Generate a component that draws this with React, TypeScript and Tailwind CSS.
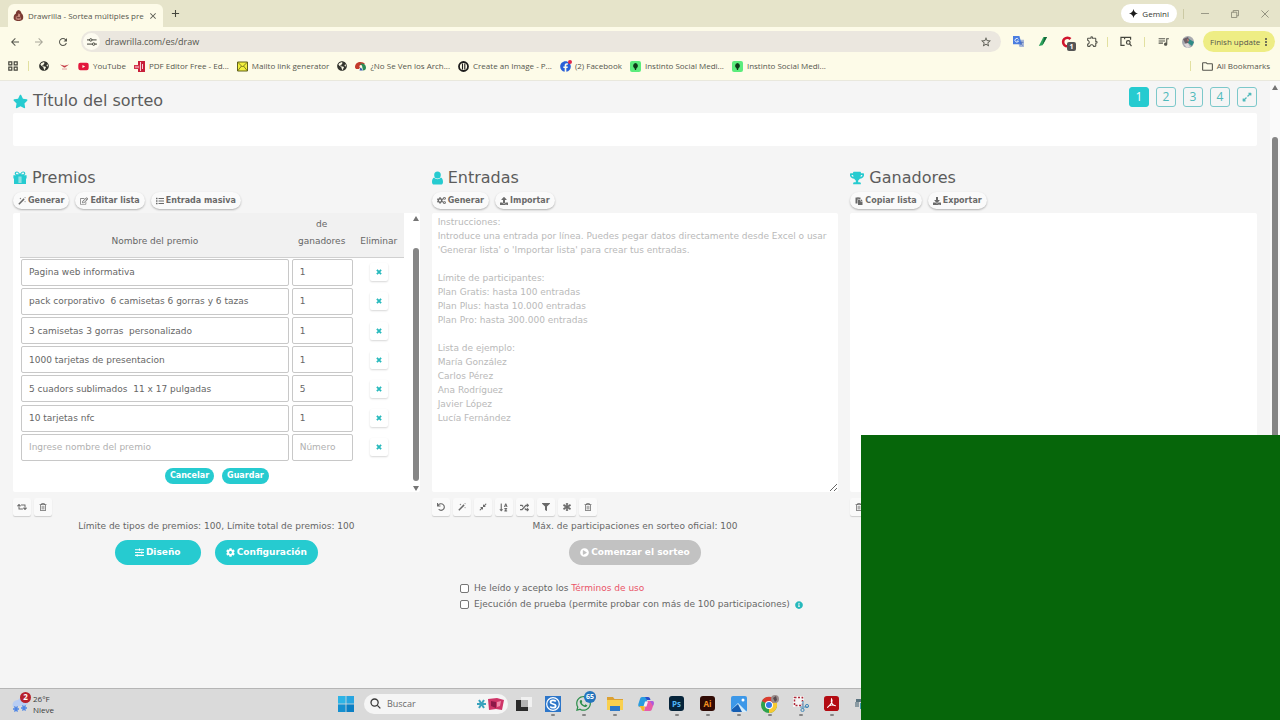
import React, { useState } from 'react';
import {
  FaAsterisk,
  FaCog,
  FaCogs,
  FaCompressAlt,
  FaDownload,
  FaExpandAlt,
  FaFilter,
  FaGlobeAmericas,
  FaInfoCircle,
  FaList,
  FaPaste,
  FaPlayCircle,
  FaRandom,
  FaRegEdit,
  FaRegTrashAlt,
  FaRetweet,
  FaSlidersH,
  FaSortAlphaDown,
  FaStar,
  FaTrophy,
  FaUndo,
  FaUpload,
  FaFacebook,
  FaYoutube,
  FaWhatsapp,
} from 'react-icons/fa';
import {
  MdArrowBack,
  MdArrowForward,
  MdClose,
  MdMoreVert,
  MdOutlineExtension,
  MdOutlineFolder,
  MdQueueMusic,
  MdRefresh,
  MdStarBorder,
} from 'react-icons/md';

const prizes = [
  { name: 'Pagina web informativa', count: '1' },
  { name: 'pack corporativo  6 camisetas 6 gorras y 6 tazas', count: '1' },
  { name: '3 camisetas 3 gorras  personalizado', count: '1' },
  { name: '1000 tarjetas de presentacion', count: '1' },
  { name: '5 cuadors sublimados  11 x 17 pulgadas', count: '5' },
  { name: '10 tarjetas nfc', count: '1' },
  { name: '', count: '' },
];

const placeholder = `Instrucciones:
Introduce una entrada por línea. Puedes pegar datos directamente desde Excel o usar 'Generar lista' o 'Importar lista' para crear tus entradas.

Límite de participantes:
Plan Gratis: hasta 100 entradas
Plan Plus: hasta 10.000 entradas
Plan Pro: hasta 300.000 entradas

Lista de ejemplo:
María González
Carlos Pérez
Ana Rodríguez
Javier López
Lucía Fernández`;

/* ---------- small drawings ---------- */

const GiftIcon = () => (
  <svg viewBox="0 0 14 14" className="size-[14px]" fill="#26cbd0">
    <path
      fillRule="evenodd"
      d="M6.2 4.2H4.1C2.6 4.2 1.7 3.400 1.700 2.400 1.700 1.300 2.600.500 3.800.500c1.400 0 2.300 1 3.200 2.300C7.900 1.500 8.800.500 10.200.500c1.200 0 2.100.8 2.100 1.900 0 1-.9 1.800-2.400 1.800H13.600v3.300H13V13H1V7.500H.4V4.200zM3.900 1.600c-.6 0-1 .4-1 .8s.4.8 1.200.8h1.800C5.200 2.200 4.600 1.600 3.900 1.600zM10.100 1.600c-.7 0-1.300.6-2 1.600h1.800c.8 0 1.200-.4 1.200-.8s-.4-.8-1-.8zM5.700 5.500V12h.8V5.500zM7.500 5.500V12h.8V5.500z"
    />
  </svg>
);

const UserIcon = () => (
  <svg viewBox="0 0 11 14" className="h-[14px] w-[11px]" fill="#26cbd0">
    <ellipse cx="5.500" cy="4" rx="3.300" ry="3.500" />
    <path d="M2.200 6.600C.8 7 0 8.800 0 11c0 1.600.8 2.600 2.100 2.600h6.800c1.300 0 2.100-1 2.100-2.600 0-2.200-.8-4-2.200-4.400C8 7.700 6.900 8.300 5.500 8.300S3 7.700 2.200 6.600z" />
  </svg>
);

const WandIcon = () => (
  <svg viewBox="0 0 10 10" className="size-[8px]" fill="currentColor">
    <path d="M.4 8.300L7 1.700 8.300 3 1.700 9.600z" />
    <path d="M3 .6l.4.9.9.4-.9.4L3 3.200l-.4-.9-.9-.4.9-.4zM8.800 0l.3.7.7.3-.7.3-.3.7-.3-.7-.7-.3.7-.3zM8.800 5l.3.7.7.3-.7.3-.3.7-.3-.7-.7-.3.7-.3z" />
  </svg>
);

const CrossIcon = () => (
  <svg viewBox="0 0 8 8" className="size-[6px]" stroke="#26b9bc" strokeWidth="2.400">
    <path d="M1.200 1.200l5.600 5.600M6.800 1.200L1.200 6.800" />
  </svg>
);

const GorillaIcon = () => (
  <svg viewBox="0 0 12 12" className="size-[11px] shrink-0">
    <path d="M6 0c2 .5 3 2 3.200 3.500C11 5 11.500 7 11 9.500 10 11.500 8 12 6 12S1.500 11.500.8 9.500C.5 7 1 5 3 4 3 2 4.500.5 6 0z" fill="#7a3a32" />
    <path d="M6 3.500l2 1.500-.5 2H5zM3 7h5l1 3-3 1-3-1z" fill="#c98d80" />
    <path d="M4 8h4v1H4z" fill="#53211c" />
  </svg>
);

const TuneIcon = () => (
  <svg viewBox="0 0 12 12" className="size-[10px]" fill="none" stroke="#45463d" strokeWidth="1.200">
    <path d="M0 3.500h3M6 3.500h5.500M0 8.500h6M9.500 8.500H12" />
    <circle cx="4.500" cy="3.500" r="1.500" />
    <circle cx="8" cy="8.500" r="1.500" />
  </svg>
);

const AppsIcon = () => (
  <svg viewBox="0 0 10 10" className="size-[10px]" fill="none" stroke="#45463d" strokeWidth="1.200">
    <path d="M.8.8h3v3h-3zM6.200.8h3v3h-3zM.8 6.200h3v3h-3zM6.200 6.200h3v3h-3z" />
  </svg>
);

const PlaneIcon = () => (
  <svg viewBox="0 0 11 11" className="size-[11px]">
    <path d="M1 3.500l4.500 1.200L10 3.500 6 6.500H5z" fill="#c43b45" />
    <path d="M3 8h5" stroke="#e0a0a0" />
  </svg>
);

const PdfEditIcon = () => (
  <svg viewBox="0 0 11 11" className="size-[11px]">
    <path d="M4 0h7v11H4z" fill="#c8203a" />
    <path d="M0 4h6v4H0z" fill="#d5344b" />
    <path d="M6.500 1v9M8.500 3v5M1 6h4" stroke="#fff" strokeWidth=".8" />
  </svg>
);

const MailIcon = () => (
  <svg viewBox="0 0 11 11" className="size-[11px]">
    <path d="M.5 1h10v9H.5z" fill="#f2f03c" stroke="#63631c" />
    <path d="M.5 1l5 5 5-5M.5 10l4-5M10.500 10l-4-5" fill="none" stroke="#63631c" strokeWidth=".8" />
  </svg>
);

const SwirlIcon = () => (
  <svg viewBox="0 0 11 11" className="size-[11px]">
    <path d="M0 6.500C0 2.500 2.500 1 5.500 1c2 0 3.500.8 4.500 2L6 5 4 8H1z" fill="#c33a2c" />
    <path d="M5 2.500c3-.5 6 .5 6 4 0 2-1 3-3 3L7 5z" fill="#2a8b55" />
    <path d="M4.500 9.500L5.500 6 8 9.500z" fill="#3b5fb0" />
    <circle cx="5.800" cy="5.400" r="1.300" fill="#fcfae8" />
  </svg>
);

const CreateIcon = () => (
  <svg viewBox="0 0 11 11" className="size-[11px]" fill="none" stroke="#1c1c1c">
    <circle cx="5.500" cy="5.500" r="4.500" strokeWidth="1.800" />
    <path d="M4.500 2.500v6M6.800 2.500v6" strokeWidth="1.100" />
  </svg>
);

const GreenIcon = () => (
  <svg viewBox="0 0 11 11" className="size-[11px]">
    <rect width="11" height="11" rx="2" fill="#5bec7c" />
    <path d="M5.500 2a2.800 2.800 0 0 1 1 5.200L6 9H5l-.5-1.800A2.800 2.800 0 0 1 5.500 2z" fill="#0e3b1a" />
  </svg>
);

const FacebookIcon = () => (
  <span className="relative">
    <FaFacebook className="size-[11px] text-[#2a5fd8]" />
    <span className="absolute -top-px -right-px size-[4px] rounded-full bg-[#e0284a]" />
  </span>
);

const TranslateIcon = () => (
  <svg viewBox="0 0 12 12" className="size-[11px]">
    <path d="M5 4h7v8H7z" fill="#a9b8d8" />
    <path d="M0 0h7l2.500 9H0z" fill="#4a7de0" />
    <path d="M6 3.800A2 2 0 1 0 6 5.500H4.300" fill="none" stroke="#fff" strokeWidth=".9" />
    <path d="M7.500 7h4M9.500 6v1c0 1.500-1 2.500-2 3M8.500 8l2 2.500" fill="none" stroke="#4a6bb5" strokeWidth=".7" />
  </svg>
);

const PenIcon = () => (
  <svg viewBox="0 0 12 12" className="size-[11px]">
    <path d="M7 1h4L6 10 2 11z" fill="#2aa05a" />
    <path d="M8 1h3L6 10z" fill="#14693a" />
  </svg>
);

const SheetSearchIcon = () => (
  <svg viewBox="0 0 13 12" className="h-[11px] w-[12px]" fill="none" stroke="#45463d" strokeWidth="1.300">
    <path d="M5 10.200H1V1.500h10.500V4M1 1.500h4v2" />
    <circle cx="9" cy="7" r="2" />
    <path d="M10.500 8.500l2 2.500" />
  </svg>
);

const Avatar = () => (
  <svg viewBox="0 0 12 12" className="size-[12px]">
    <circle cx="6" cy="6" r="6" fill="#a8aab0" />
    <path d="M1 3l5-2 2 5-4 3z" fill="#6c5f66" />
    <path d="M7 3l5 3-2 4-4-3z" fill="#2f8b86" />
    <path d="M2 8l4-1 2 4-3 1z" fill="#ded7d8" />
    <path d="M5 3l2 1-1 2z" fill="#d97d6d" />
  </svg>
);

const SnowIcon = () => (
  <svg viewBox="0 0 18 18" className="size-[18px]">
    <path d="M1 12a5 5 0 0 1 5-7 5 5 0 0 1 9 5z" fill="#b8cdf3" />
    <g stroke="#4e86e6" strokeWidth="1.300" fill="none">
      <path d="M1 14h6M2.500 11.400l3 5.200M5.500 11.400l-3 5.200" />
      <path d="M9 13h6M10.500 10.400l3 5.200M13.500 10.400l-3 5.200" />
    </g>
  </svg>
);

const WindowsIcon = () => (
  <svg viewBox="0 0 16 16" className="size-[16px]">
    <path d="M0 0h7.600v7.600H0z" fill="#2db4e6" />
    <path d="M8.400 0H16v7.600H8.400z" fill="#28a5e0" />
    <path d="M0 8.400h7.600V16H0z" fill="#1590d0" />
    <path d="M8.400 8.400H16V16H8.400z" fill="#0b7fc4" />
  </svg>
);

const SearchIcon = () => (
  <svg viewBox="0 0 12 12" className="size-[11px]" fill="none" stroke="#3a3a3a" strokeWidth="1.400">
    <circle cx="5" cy="5" r="3.900" />
    <path d="M8 8l3.300 3.300" />
  </svg>
);

const SearchArt = () => (
  <svg viewBox="0 0 28 14" className="h-[14px] w-[28px]">
    <path d="M1 7h9M3 3l5 8M8 3l-5 8" stroke="#3ba3bd" strokeWidth="2" />
    <path d="M12 2l9-1 7 2-2 10-6-1-7 1z" fill="#cf3568" />
    <path d="M15 4l5 1v6l-5-2z" fill="#8c1848" />
    <path d="M21 5l4-1-1 5-3 1z" fill="#f08bab" />
  </svg>
);

const TaskViewIcon = () => (
  <svg viewBox="0 0 16 16" className="size-[16px]">
    <path d="M5 1h11v10H5z" fill="#f1f1f1" />
    <path d="M0 4h5v7h7v4H0z" fill="#2a2a2a" />
    <path d="M5 4h7v7H5z" fill="#b4b4b4" />
  </svg>
);

const SIcon = () => (
  <svg viewBox="0 0 16 16" className="size-[16px]">
    <path d="M0 0h16v16H0z" fill="#2d76c9" />
    <circle cx="8" cy="8" r="6.300" fill="none" stroke="#fff" strokeWidth="1.200" />
    <path d="M10.800 5.500C9.500 3.800 5.500 4 5.500 6.200c0 2.300 5.200 1.300 5.200 3.700 0 2.200-4 2.400-5.500.6" fill="none" stroke="#fff" strokeWidth="1.800" />
  </svg>
);

const FolderIcon = () => (
  <svg viewBox="0 0 16 16" className="size-[16px]">
    <path d="M0 1h6l1.500 2H16v4H0z" fill="#dca132" />
    <path d="M0 4h16v10H0z" fill="#f9d04e" />
    <path d="M3 10h10v5H3z" fill="#2e79c7" />
  </svg>
);

const CopilotIcon = () => (
  <svg viewBox="0 0 16 16" className="size-[16px]">
    <path d="M4 1h6l-3 10H2C0 11 0 9 .5 7.500L2 3c.4-1.300 1-2 2-2z" fill="#2a9ce0" />
    <path d="M10 1c1.500 0 2 1 2.500 3H9L7 1z" fill="#2c4ecb" />
    <path d="M12 15H6l3-10h5c2 0 2 2 1.500 3.500L14 13c-.4 1.300-1 2-2 2z" fill="#e85ca8" />
    <path d="M1 10h6l-1 5c-2 0-2.500-1-3-3z" fill="#f2b42c" />
    <path d="M12 5h2c2 0 2 2 1.500 3.500L15 10z" fill="#a95be0" />
    <path d="M7 5.500h3L8.500 10.500h-3z" fill="#f4f1f7" />
  </svg>
);

const PhotosIcon = () => (
  <svg viewBox="0 0 16 16" className="size-[16px]">
    <rect width="16" height="16" rx="2" fill="#3d98e8" />
    <path d="M0 14l7-7 9 9H2z" fill="#d4ecfb" />
    <path d="M0 14l7-6 4 8H2z" fill="#175fb3" />
    <circle cx="12" cy="4" r="1.500" fill="#fff" />
  </svg>
);

const ChromeIcon = () => (
  <svg viewBox="0 0 18 18" className="size-[18px]">
    <circle cx="8" cy="10" r="8" fill="#2fa24c" />
    <path d="M8 10L1 6a8 8 0 0 1 14 0z" fill="#dc3c2f" />
    <path d="M8 10l7-4a8 8 0 0 1-7 12z" fill="#f7c932" />
    <circle cx="8" cy="10" r="4" fill="#fff" />
    <circle cx="8" cy="10" r="3" fill="#3578e5" />
    <circle cx="14" cy="4" r="4" fill="#9a8c8b" />
    <path d="M12 3l3-2 1 4-2 2z" fill="#57494e" />
  </svg>
);

const SnipIcon = () => (
  <svg viewBox="0 0 16 16" className="size-[16px]">
    <path d="M0 0h11v11H0z" fill="#f4f4f4" />
    <path d="M1.500 1.500h8v8h-8z" fill="none" stroke="#b02a3a" strokeWidth="1.500" strokeDasharray="2 1.500" />
    <path d="M10 5v8M7 11h8" stroke="#7fa9c6" strokeWidth="1.600" />
    <circle cx="9.500" cy="14" r="1.600" fill="none" stroke="#4389b8" />
    <circle cx="14" cy="10" r="1.600" fill="none" stroke="#4389b8" />
  </svg>
);

const AcrobatIcon = () => (
  <svg viewBox="0 0 16 16" className="size-[15px]">
    <rect width="16" height="16" rx="3" fill="#b30b12" />
    <path d="M8 3c1.500 2-.5 6-4.500 9.500C5 9.500 9 9 12.500 10.500 9.500 10.500 7 7 8 3z" fill="none" stroke="#fff" strokeWidth="1.100" />
  </svg>
);

const DeviceIcon = () => (
  <svg viewBox="0 0 16 16" className="size-[16px]">
    <path d="M1 3h14v3H1z" fill="#5c7480" />
    <path d="M0 6h4v5H0z" fill="#8b9ba3" />
    <path d="M5 7h10v6H5z" fill="#3f9ab0" />
  </svg>
);

/* ---------- shared controls ---------- */

const bookmarks = [
  { icon: <PlaneIcon />, label: '' },
  { icon: <FaYoutube className="size-[11px] text-[#e3173c]" />, label: 'YouTube' },
  { icon: <PdfEditIcon />, label: 'PDF Editor Free - Ed...' },
  { icon: <MailIcon />, label: 'Mailto link generator' },
  { icon: <FaGlobeAmericas className="size-[10px] text-[#33342e]" />, label: '' },
  { icon: <SwirlIcon />, label: '¿No Se Ven los Arch...' },
  { icon: <CreateIcon />, label: 'Create an Image - P...' },
  { icon: <FacebookIcon />, label: '(2) Facebook' },
  { icon: <GreenIcon />, label: 'Instinto Social Medi...' },
  { icon: <GreenIcon />, label: 'Instinto Social Medi...' },
];

const PillButton = ({ icon, children }: { icon: React.ReactNode; children: React.ReactNode }) => (
  <button className="flex h-[17px] items-center gap-[2px] rounded-full bg-[#fafafa] px-[5px] text-[8px] font-bold text-[#6a6a6a] shadow-[0_1px_2px_rgba(0,0,0,0.28)]">
    {icon}
    {children}
  </button>
);

const ToolButton = ({ label, children }: { label: string; children: React.ReactNode }) => (
  <button
    aria-label={label}
    className="flex size-[18px] items-center justify-center rounded-[2px] bg-[#fafafa] text-[8px] text-[#6a6a6a] shadow-[0_1px_1px_rgba(0,0,0,0.16)]"
  >
    {children}
  </button>
);

const ColumnTitle = ({ icon, children }: { icon: React.ReactNode; children: React.ReactNode }) => (
  <h2 className="flex h-[30px] items-center gap-[5px] pt-[2px] text-[16px] text-[#5c5c5c]">
    {icon}
    {children}
  </h2>
);

const Divider = () => <span className="h-[10px] w-px bg-[#e2e0a0]" />;

/* ---------- browser chrome ---------- */

const BrowserBar = () => (
  <header className="font-['Open_Sans',sans-serif] text-[#55564d]">
    <div className="flex h-[27px] items-center bg-[#e6e4ca] pr-[11px]">
      <div className="ml-2 flex h-[23px] w-[155px] items-center gap-1 self-end rounded-t-[6px] bg-[#fdfbe8] pr-[6px] pl-[5px] text-[8px]">
        <GorillaIcon />
        <span className="flex-1 whitespace-nowrap">Drawrilla - Sortea múltiples pre</span>
        <button aria-label="Cerrar pestaña">
          <MdClose className="size-[10px]" />
        </button>
      </div>
      <button aria-label="Nueva pestaña" className="ml-2">
        <svg viewBox="0 0 10 10" className="size-[9px]" stroke="#45463d" strokeWidth="1.200">
          <path d="M5 1v8M1 5h8" />
        </svg>
      </button>
      <div className="ml-auto flex items-center">
        <button className="flex h-[19px] items-center gap-1 rounded-full bg-white px-2 text-[8px] font-medium text-[#33342e]">
          <svg viewBox="0 0 10 10" className="size-[9px]" fill="#1c1c1c">
            <path d="M5 0c.6 3 2 4.400 5 5-3 .6-4.400 2-5 5-.6-3-2-4.400-5-5 3-.6 4.400-2 5-5z" />
          </svg>
          Gemini
        </button>
        <span className="ml-[6px] h-[10px] w-px bg-[#cbc9a4]" />
        <div className="ml-[17px] flex items-center gap-[22px]">
          <button aria-label="Minimizar" className="h-px w-[8px] bg-[#9a9987]" />
          <button aria-label="Restaurar">
            <svg viewBox="0 0 9 9" className="size-[8px]" fill="none" stroke="#8a8977">
              <path d="M.5 2.500h6v6h-6zM2.500 2.500v-2h6v6h-2" />
            </svg>
          </button>
          <button aria-label="Cerrar">
            <svg viewBox="0 0 9 9" className="size-[8px]" fill="none" stroke="#8a8977">
              <path d="M.5.5l8 8M8.500.5l-8 8" />
            </svg>
          </button>
        </div>
      </div>
    </div>

    <div className="flex h-[28px] items-center bg-[#fdfbe8] pt-px pr-[5px] pl-[9px]">
      <div className="flex w-[72px] items-center gap-3">
        <button aria-label="Atrás">
          <MdArrowBack className="size-[12px]" />
        </button>
        <button aria-label="Adelante">
          <MdArrowForward className="size-[12px] text-[#a9a89a]" />
        </button>
        <button aria-label="Recargar">
          <MdRefresh className="size-[12px]" />
        </button>
      </div>
      <div className="flex h-[21px] flex-1 items-center gap-[5px] rounded-full bg-[#ebe7df] pr-[9px] pl-[2px]">
        <span className="flex size-[17px] items-center justify-center rounded-full bg-[#fdfbf0]">
          <TuneIcon />
        </span>
        <input aria-label="Dirección" defaultValue="drawrilla.com/es/draw" className="flex-1 bg-transparent text-[9px] outline-none" />
        <MdStarBorder className="size-[12px]" />
      </div>
      <div className="ml-3 flex items-center gap-[13px]">
        <TranslateIcon />
        <PenIcon />
        <span className="relative">
          <svg viewBox="0 0 12 12" className="size-[12px]" fill="none" stroke="#d0142c" strokeWidth="2.600">
            <path d="M9.500 3a4.300 4.300 0 1 0 0 6" />
          </svg>
          <span className="absolute -right-[3px] -bottom-[3px] flex size-[9px] items-center justify-center rounded-[2px] bg-[#555] text-[7px] leading-none font-bold text-white">1</span>
        </span>
        <MdOutlineExtension className="size-[13px]" />
      </div>
      <div className="ml-2 flex items-center gap-3">
        <Divider />
        <SheetSearchIcon />
        <Divider />
        <MdQueueMusic className="size-[13px]" />
        <Avatar />
      </div>
      <button className="ml-[9px] flex h-[21px] w-[72px] items-center justify-between rounded-full bg-[#eeed84] pr-1 pl-[7px] text-[8px] whitespace-nowrap">
        Finish update
        <MdMoreVert className="size-[12px] shrink-0" />
      </button>
    </div>

    <nav
      aria-label="Marcadores"
      className="flex h-[26px] items-center gap-[10px] border-b border-[#e9e8dd] bg-[#fdfbe8] pr-[10px] pb-[3px] pl-[8px] text-[8px]"
    >
      <AppsIcon />
      <Divider />
      <a href="#" aria-label="Marcador">
        <FaGlobeAmericas className="size-[10px] text-[#33342e]" />
      </a>
      <div className="flex items-center gap-2">
        {bookmarks.map((b, i) => (
          <a key={i} href="#" aria-label={b.label || 'Marcador'} className="flex items-center gap-1 whitespace-nowrap">
            {b.icon}
            {b.label}
          </a>
        ))}
      </div>
      <div className="ml-auto flex items-center gap-[10px]">
        <Divider />
        <a href="#" className="flex items-center gap-[3px] whitespace-nowrap">
          <MdOutlineFolder className="size-[13px]" />
          All Bookmarks
        </a>
      </div>
    </nav>
  </header>
);

/* ---------- page columns ---------- */

const PrizeColumn = () => (
  <section>
    <ColumnTitle icon={<GiftIcon />}>Premios</ColumnTitle>
    <div className="flex gap-[6px]">
      <PillButton icon={<WandIcon />}>Generar</PillButton>
      <PillButton icon={<FaRegEdit className="size-[8px]" />}>Editar lista</PillButton>
      <PillButton icon={<FaList className="size-[8px]" />}>Entrada masiva</PillButton>
    </div>
    <div className="mt-1 flex h-[279px] rounded-[2px] bg-white">
      <div className="flex-1 pr-2 pl-[7px]">
        <table className="h-[249px] w-full table-fixed text-[9px] text-[#666]">
          <thead>
            <tr className="h-11 border-b border-[#d0d0d0] bg-[#f1f1f1]">
              <th className="pb-[7px] align-bottom leading-[17px] font-normal">Nombre del premio</th>
              <th className="w-[64px] pb-[7px] align-bottom leading-[17px] font-normal">
                de
                <br />
                ganadores
              </th>
              <th className="w-[50px] pb-[7px] align-bottom leading-[17px] font-normal">Eliminar</th>
            </tr>
          </thead>
          <tbody>
            {prizes.map((prize, i) => (
              <tr key={i}>
                <td className="px-px">
                  <input
                    aria-label="Nombre del premio"
                    defaultValue={prize.name}
                    placeholder="Ingrese nombre del premio"
                    className="block h-[27px] w-full rounded-[2px] border border-[#c8c8c8] px-[7px] placeholder:text-[#b0b0b0]"
                  />
                </td>
                <td className="pr-px pl-[2px]">
                  <input
                    aria-label="Número de ganadores"
                    defaultValue={prize.count}
                    placeholder="Número"
                    className="block h-[27px] w-full rounded-[2px] border border-[#c8c8c8] px-[7px] placeholder:text-[#b0b0b0]"
                  />
                </td>
                <td>
                  <button
                    aria-label="Eliminar premio"
                    className="mx-auto flex size-[18px] items-center justify-center rounded-[2px] bg-white shadow-[0_1px_2px_rgba(0,0,0,0.16)]"
                  >
                    <CrossIcon />
                  </button>
                </td>
              </tr>
            ))}
          </tbody>
        </table>
        <div className="mt-[6px] flex justify-center gap-2 pl-[10px] text-[8px] font-bold text-white">
          <button className="h-4 rounded-full bg-[#26cbd0] px-[5px]">Cancelar</button>
          <button className="h-4 rounded-full bg-[#26cbd0] px-[5px]">Guardar</button>
        </div>
      </div>
      <div className="flex w-2 flex-col items-center pt-[3px] pb-px">
        <span className="border-x-3 border-b-5 border-x-transparent border-b-[#757575]" />
        <span className="mt-[27px] mb-[5px] w-[6px] flex-1 rounded-full bg-[#868686]" />
        <span className="border-x-3 border-t-5 border-x-transparent border-t-[#757575]" />
      </div>
    </div>
    <div className="mt-[6px] flex gap-[3px]">
      <ToolButton label="Repetir"><FaRetweet className="size-[10px]" /></ToolButton>
      <ToolButton label="Borrar"><FaRegTrashAlt /></ToolButton>
    </div>
    <p className="mt-[3px] text-center text-[9px] leading-[14px]">Límite de tipos de premios: 100, Límite total de premios: 100</p>
    <div className="mt-[7px] flex justify-center gap-[14px] text-[9px] font-bold text-white">
      <button className="flex h-[25px] w-[86px] items-center justify-center gap-[2px] rounded-full bg-[#26cbd0]">
        <FaSlidersH className="size-[9px]" />
        Diseño
      </button>
      <button className="flex h-[25px] items-center justify-center gap-[2px] rounded-full bg-[#26cbd0] px-[11px]">
        <FaCog className="size-[9px]" />
        Configuración
      </button>
    </div>
  </section>
);

const EntryColumn = () => (
  <section>
    <ColumnTitle icon={<UserIcon />}>Entradas</ColumnTitle>
    <div className="flex gap-[6px]">
      <PillButton icon={<FaCogs className="size-[9px]" />}>Generar</PillButton>
      <PillButton icon={<FaUpload className="size-[8px]" />}>Importar</PillButton>
    </div>
    <textarea
      aria-label="Entradas"
      placeholder={placeholder}
      className="mt-1 block h-[279px] w-full rounded-[2px] bg-white px-[6px] py-[2px] text-[9px] leading-[14px] placeholder:text-[#b9b9b9]"
    />
    <div className="mt-[6px] flex gap-[3px]">
      <ToolButton label="Deshacer"><FaUndo /></ToolButton>
      <ToolButton label="Limpiar"><WandIcon /></ToolButton>
      <ToolButton label="Comprimir"><FaCompressAlt /></ToolButton>
      <ToolButton label="Ordenar"><FaSortAlphaDown className="size-[9px]" /></ToolButton>
      <ToolButton label="Mezclar"><FaRandom className="size-[9px]" /></ToolButton>
      <ToolButton label="Filtrar"><FaFilter /></ToolButton>
      <ToolButton label="Ocultar"><FaAsterisk stroke="currentColor" strokeWidth="40" /></ToolButton>
      <ToolButton label="Borrar"><FaRegTrashAlt /></ToolButton>
    </div>
    <p className="mt-[3px] text-center text-[9px] leading-[14px]">Máx. de participaciones en sorteo oficial: 100</p>
    <div className="mt-[7px] flex justify-center">
      <button className="flex h-[25px] items-center gap-[2px] rounded-full bg-[#c2c2c2] px-[11px] text-[9px] font-bold text-white">
        <FaPlayCircle className="size-[9px]" />
        Comenzar el sorteo
      </button>
    </div>
    <div className="mt-4 flex justify-center pr-[7px]">
      <div className="flex flex-col gap-px text-[9px] leading-[15px]">
        <div className="flex items-center gap-[5px]">
          <input id="terms" type="checkbox" className="size-[9px] appearance-none rounded-[2px] border border-[#767676] bg-white checked:bg-[#26cbd0]" />
          <label htmlFor="terms">
            He leído y acepto los <a href="#" className="text-[#ea5468]">Términos de uso</a>
          </label>
        </div>
        <div className="flex items-center gap-[5px]">
          <input id="test" type="checkbox" className="size-[9px] appearance-none rounded-[2px] border border-[#767676] bg-white checked:bg-[#26cbd0]" />
          <label htmlFor="test">Ejecución de prueba (permite probar con más de 100 participaciones)</label>
          <FaInfoCircle className="size-[8px] text-[#26b9bc]" />
        </div>
      </div>
    </div>
  </section>
);

const WinnerColumn = () => (
  <section>
    <ColumnTitle icon={<FaTrophy className="size-[14px] text-[#26cbd0]" />}>Ganadores</ColumnTitle>
    <div className="flex gap-[6px]">
      <PillButton icon={<FaPaste className="size-[8px]" />}>Copiar lista</PillButton>
      <PillButton icon={<FaDownload className="size-[8px]" />}>Exportar</PillButton>
    </div>
    <div className="mt-1 h-[279px] rounded-[2px] bg-white" />
    <div className="mt-[6px] flex">
      <ToolButton label="Borrar"><FaRegTrashAlt /></ToolButton>
    </div>
  </section>
);

const apps = [
  { icon: <SIcon /> },
  { icon: <FaWhatsapp className="size-[17px] text-[#2f8f4d]" />, badge: '65' },
  { icon: <FolderIcon /> },
  { icon: <CopilotIcon />, idle: true },
  { icon: <span className="flex size-[15px] items-center justify-center rounded-[3px] bg-[#06243a] text-[8px] font-bold text-[#4fb4f5]">Ps</span> },
  { icon: <span className="flex size-[15px] items-center justify-center rounded-[3px] bg-[#300a04] text-[8px] font-bold text-[#f79320]">Ai</span> },
  { icon: <PhotosIcon /> },
  { icon: <ChromeIcon /> },
  { icon: <SnipIcon /> },
  { icon: <AcrobatIcon /> },
  { icon: <DeviceIcon /> },
];

const Taskbar = () => (
  <footer className="flex h-8 items-center border-t border-[#b5b5b5] bg-[#dadada] pb-[2px] font-['Open_Sans',sans-serif] text-[8px] text-[#3a3a3a]">
    <div className="flex w-[338px] items-center gap-[3px] pl-3">
      <span className="relative">
        <SnowIcon />
        <span className="absolute -top-[3px] left-[8px] flex size-[11px] items-center justify-center rounded-full bg-[#b8202c] text-[8px] font-bold text-white">2</span>
      </span>
      <p className="leading-[11px]">
        26°F
        <br />
        Nieve
      </p>
    </div>
    <WindowsIcon />
    <div className="ml-[10px] flex h-[20px] w-[144px] items-center gap-[6px] rounded-full bg-[#f5f5f5] pr-1 pl-[6px]">
      <SearchIcon />
      <input aria-label="Buscar" placeholder="Buscar" className="w-0 flex-1 bg-transparent text-[9px] outline-none placeholder:text-[#6a6a6a]" />
      <SearchArt />
    </div>
    <span className="mr-[5px] ml-2">
      <TaskViewIcon />
    </span>
    {apps.map((app, i) => (
      <span key={i} className="relative flex h-full w-[31px] shrink-0 items-center justify-center">
        {app.icon}
        {app.badge && (
          <span className="absolute top-[2px] right-[3px] flex size-[12px] items-center justify-center rounded-full bg-[#2475bd] text-[7px] font-bold text-white">
            {app.badge}
          </span>
        )}
        {!app.idle && <span className="absolute bottom-[2px] h-[2px] w-[4px] rounded-full bg-[#858585]" />}
      </span>
    ))}
  </footer>
);

export default function App() {
  const [page, setPage] = useState(1);

  return (
    <div className="relative flex min-h-screen flex-col overflow-hidden font-['DejaVu_Sans',sans-serif]">
      <BrowserBar />
      <div className="flex flex-1 bg-[#f5f5f5] text-[#666]">
        <main className="flex-1 px-[13px]">
          <div className="flex h-8 items-center justify-between">
            <h1 className="flex items-center gap-[5px] pt-2 text-[16px] text-[#5c5c5c]">
              <FaStar className="size-[15px] text-[#26cbd0]" />
              <label htmlFor="title">Título del sorteo</label>
            </h1>
            <div className="flex gap-[7px] text-[12px] text-[#4fb9bb]">
              {[1, 2, 3, 4].map((n) => (
                <button
                  key={n}
                  onClick={() => setPage(n)}
                  className={`size-[20px] rounded-[3px] border font-['Open_Sans',sans-serif] leading-none ${
                    page === n ? 'border-[#26cbd0] bg-[#26cbd0] text-white' : 'border-[#7cc8ca]'
                  }`}
                >
                  {n}
                </button>
              ))}
              <button aria-label="Ampliar" className="flex size-[20px] items-center justify-center rounded-[3px] border border-[#7cc8ca]">
                <FaExpandAlt className="size-[10px]" />
              </button>
            </div>
          </div>
          <input id="title" className="block h-[33px] w-full rounded-[2px] bg-white px-2 text-[12px]" />
          <div className="mt-4 grid grid-cols-3 gap-3">
            <PrizeColumn />
            <EntryColumn />
            <WinnerColumn />
          </div>
        </main>
        <div className="flex w-[10px] flex-col items-center bg-[#fafafa] pt-[4px]">
          <span className="border-x-3 border-b-5 border-x-transparent border-b-[#757575]" />
          <span className="mt-[47px] mb-10 w-[6px] flex-1 rounded-full bg-[#868686]" />
        </div>
      </div>
      <Taskbar />
      <div className="absolute right-0 bottom-0 h-[285px] w-[419px] bg-[#06660a]" />
    </div>
  );
}
